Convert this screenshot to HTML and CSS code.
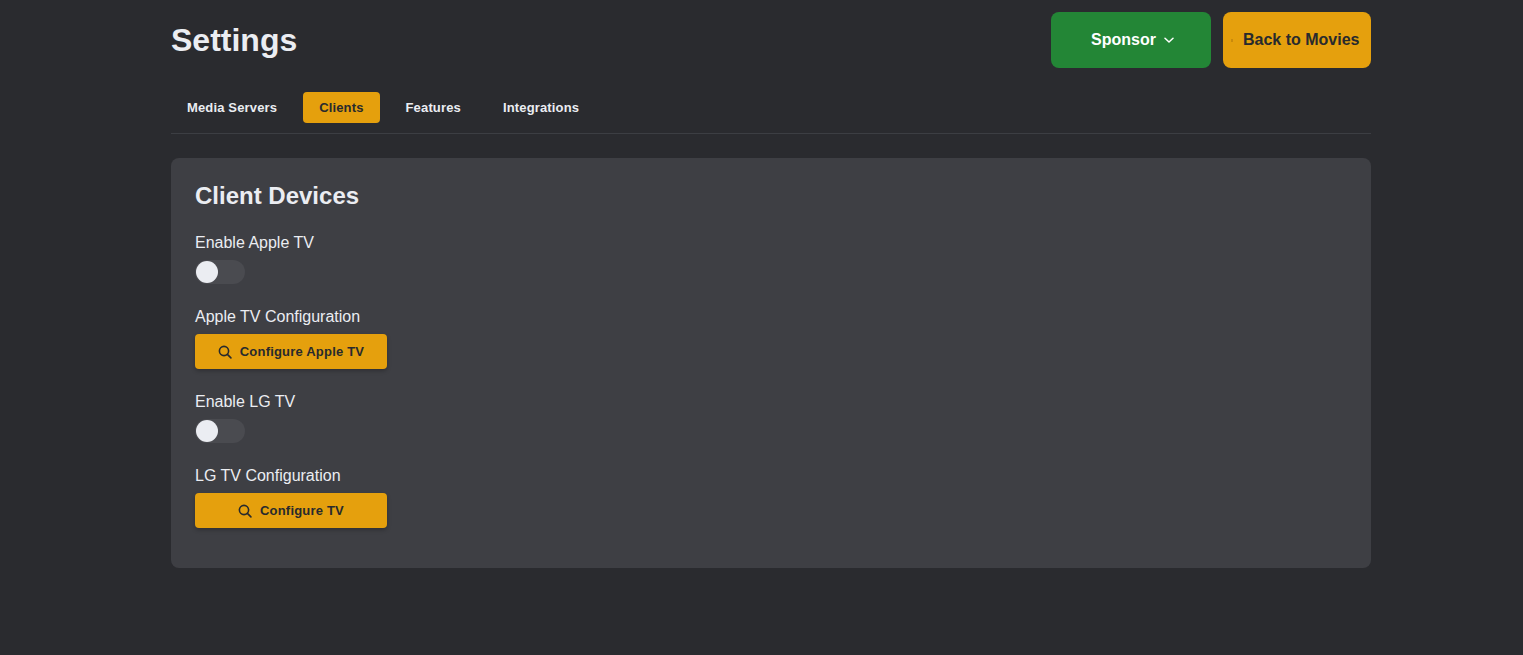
FILE: index.html
```html
<!DOCTYPE html>
<html lang="en">
<head>
    <meta charset="UTF-8">
    <meta name="viewport" content="width=device-width, initial-scale=1.0">
    <title>Settings</title>
    <link rel="stylesheet" href="styles.css">
</head>
<body>
    <div class="container">
        <header class="page-header">
            <h1>Settings</h1>
            <div class="header-actions">
                <button class="btn-sponsor">Sponsor
                    <svg width="10" height="10" viewBox="0 0 10 10" fill="none" stroke="currentColor" stroke-width="1.5" stroke-linecap="round" stroke-linejoin="round"><path d="M1 3.2 5 7l4-3.8"/></svg>
                </button>
                <button class="btn-back"><span class="back-dot"></span>Back to Movies</button>
            </div>
        </header>

        <nav class="tabs">
            <a class="tab">Media Servers</a>
            <a class="tab active">Clients</a>
            <a class="tab">Features</a>
            <a class="tab">Integrations</a>
        </nav>

        <section class="card">
            <h2>Client Devices</h2>

            <div class="field">
                <label>Enable Apple TV</label>
                <span class="toggle"><span class="knob"></span></span>
            </div>

            <div class="field">
                <label>Apple TV Configuration</label>
                <button class="btn-config">
                    <svg width="14" height="14" viewBox="0 0 14 14" fill="none" stroke="currentColor" stroke-width="1.6" stroke-linecap="round"><circle cx="6" cy="6" r="4.6"/><path d="m9.4 9.4 3.5 3.5"/></svg>
                    Configure Apple TV
                </button>
            </div>

            <div class="field">
                <label>Enable LG TV</label>
                <span class="toggle"><span class="knob"></span></span>
            </div>

            <div class="field">
                <label>LG TV Configuration</label>
                <button class="btn-config">
                    <svg width="14" height="14" viewBox="0 0 14 14" fill="none" stroke="currentColor" stroke-width="1.6" stroke-linecap="round"><circle cx="6" cy="6" r="4.6"/><path d="m9.4 9.4 3.5 3.5"/></svg>
                    Configure TV
                </button>
            </div>
        </section>
    </div>
</body>
</html>
```

FILE: styles.css
```css
* {
    box-sizing: border-box;
}
body {
    margin: 0;
    padding-left: 19px;
    min-height: 100vh;
    background-color: #2a2b2f;
    color: #ebedf2;
    font-family: "Liberation Sans", Arial, sans-serif;
}
button {
    font-family: inherit;
    border: none;
    cursor: pointer;
}
.container {
    width: 1200px;
    margin: 0 auto;
}
.page-header {
    display: flex;
    justify-content: space-between;
    align-items: center;
    padding-top: 12px;
}
h1 {
    margin: 0;
    font-size: 32px;
    line-height: 56px;
    font-weight: 700;
}
.header-actions {
    display: flex;
    gap: 12px;
}
.btn-sponsor {
    display: flex;
    align-items: center;
    justify-content: center;
    gap: 8px;
    width: 160px;
    height: 56px;
    padding: 0 0 0 3px;
    border-radius: 8px;
    background-color: #238636;
    color: #fff;
    font-size: 16px;
    font-weight: 700;
}
.btn-back {
    display: flex;
    align-items: center;
    width: 148px;
    height: 56px;
    padding: 0 0 0 8px;
    border-radius: 8px;
    background-color: #e5a00d;
    color: #282a2d;
    font-size: 16px;
    font-weight: 700;
    white-space: nowrap;
}
.back-dot {
    width: 2px;
    height: 3px;
    margin-right: 10px;
    background-color: #c98a0c;
}
.tabs {
    display: flex;
    align-items: center;
    gap: 10px;
    margin-top: 16px;
    padding: 8px 0 10px;
    border-bottom: 1px solid #3c3e43;
}
.tab {
    padding: 8px 16px;
    height: 31px;
    border-radius: 4px;
    font-size: 13px;
    line-height: 15px;
    font-weight: 700;
    letter-spacing: 0.15px;
    color: #ebedf2;
}
.tab.active {
    background-color: #e5a00d;
    color: #282a2d;
}
.card {
    margin-top: 24px;
    height: 410px;
    padding: 24px;
    border-radius: 8px;
    background-color: #3e3f44;
}
h2 {
    margin: 0 0 23px;
    font-size: 24px;
    line-height: 28px;
    font-weight: 700;
}
.field {
    display: flex;
    flex-direction: column;
    align-items: flex-start;
    margin-bottom: 23px;
}
.field label {
    font-size: 16px;
    line-height: 20px;
    margin-bottom: 7px;
}
.toggle {
    display: block;
    width: 50px;
    height: 24px;
    padding: 1px;
    border-radius: 12px;
    background-color: #4a4b50;
}
.knob {
    display: block;
    width: 22px;
    height: 22px;
    border-radius: 50%;
    background-color: #ebedf2;
}
.btn-config {
    display: flex;
    align-items: center;
    justify-content: center;
    gap: 8px;
    width: 192px;
    height: 35px;
    border-radius: 4px;
    background-color: #e5a00d;
    color: #282a2d;
    font-size: 13px;
    font-weight: 700;
    letter-spacing: 0.2px;
    box-shadow: 0 2px 4px rgba(0,0,0,0.25);
}
```
